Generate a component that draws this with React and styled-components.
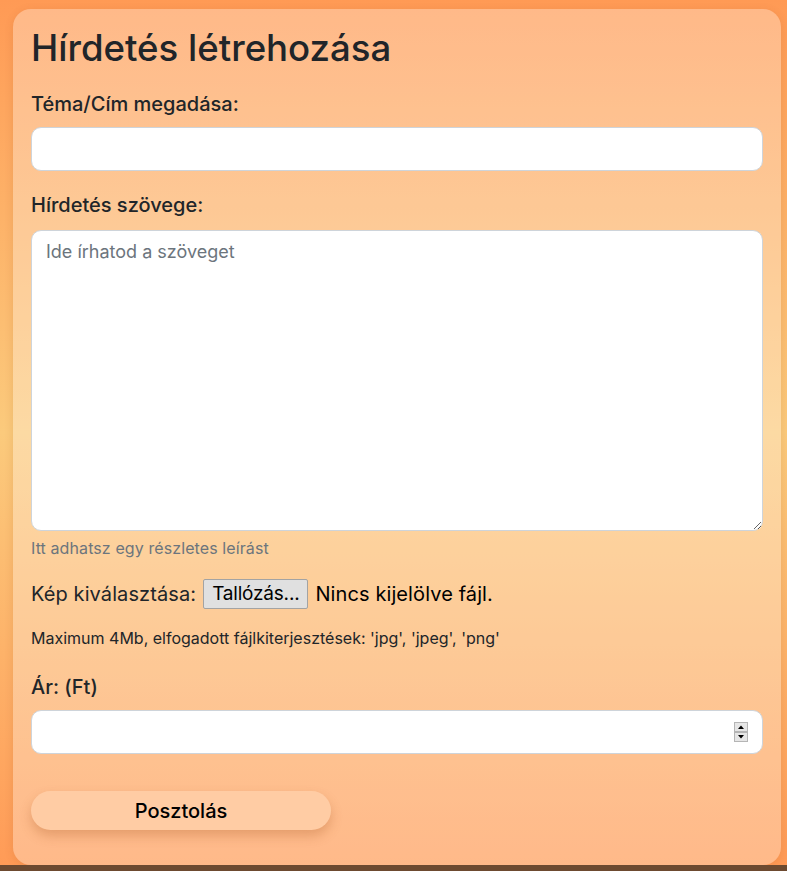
import React from 'react';
import styled, { createGlobalStyle } from 'styled-components';

const GlobalStyle = createGlobalStyle`
  html, body {
    margin: 0;
    padding: 0;
  }
  body {
    font-family: Inter, "Noto Sans", "Liberation Sans", sans-serif;
    color: #212529;
    background: #6d4a30;
  }
`;

const Page = styled.div`
  background: linear-gradient(180deg, #ff9a55 0%, #fbca7c 50%, #ff9b57 100%);
  padding: 9px 6px 0 13px;
`;

const Card = styled.form`
  background: rgba(255, 255, 255, 0.3);
  border-radius: 18px;
  padding: 18px 18px 35px 18px;
  box-shadow: 0 2px 10px rgba(120, 60, 20, 0.12);
`;

const Title = styled.h1`
  margin: 0;
  font-size: 36.6px;
  font-weight: 500;
  line-height: 43px;
`;

const Label = styled.label`
  display: block;
  font-size: 20px;
  font-weight: 500;
  line-height: 1.5;
  margin-top: ${p => p.$top || 19}px;
  margin-bottom: ${p => p.$bottom || 8}px;
`;

const TextInput = styled.input`
  display: block;
  box-sizing: border-box;
  width: 100%;
  height: 44px;
  padding: 0 14px;
  border: 1px solid #ced4da;
  border-radius: 10px;
  background: #fff;
  font: inherit;
  font-size: 18px;
  outline: none;
  appearance: textfield;
  -moz-appearance: textfield;

  &::-webkit-inner-spin-button,
  &::-webkit-outer-spin-button {
    -webkit-appearance: none;
    margin: 0;
  }
`;

const TextArea = styled.textarea`
  display: block;
  box-sizing: border-box;
  width: 100%;
  height: 301px;
  padding: 7px 14px;
  border: 1px solid #ced4da;
  border-radius: 10px;
  background: #fff;
  font: inherit;
  font-size: 18px;
  line-height: 1.5;
  outline: none;

  &::placeholder {
    color: #6c757d;
  }
`;

const Help = styled.div`
  font-size: 16px;
  line-height: 1.4;
  letter-spacing: 0.1px;
  margin-top: 6px;
  color: #6c757d;
`;

const FileRow = styled.label`
  display: flex;
  align-items: center;
  gap: 7px;
  margin-top: 20px;
  font-size: 20px;
  line-height: 30px;
  letter-spacing: 0.1px;
  cursor: pointer;

  input {
    display: none;
  }
`;

const FileButton = styled.span`
  display: inline-block;
  box-sizing: border-box;
  height: 30px;
  padding: 0 8px;
  background: #e0e0e0;
  border: 1px solid #a3a3a3;
  border-radius: 2px;
  font-size: 19px;
  line-height: 28px;
  color: #000;
  letter-spacing: -0.2px;
`;

const FileName = styled.span`
  color: #000;
  font-size: 20px;
`;

const Note = styled.div`
  font-size: 16px;
  font-weight: 400;
  line-height: 1.5;
  margin-top: 17px;
`;

const NumberWrap = styled.div`
  position: relative;
`;

const Spinner = styled.svg`
  position: absolute;
  right: 15px;
  top: 12px;
  width: 14px;
  height: 20px;
`;

const Submit = styled.button`
  display: block;
  width: 300px;
  height: 39px;
  margin-top: 37px;
  border: none;
  border-radius: 20px;
  background: #ffcca4;
  box-shadow: 0 6px 12px rgba(160, 80, 30, 0.28);
  font: inherit;
  font-size: 20px;
  font-weight: 500;
  color: #000;
  cursor: pointer;
`;

export default function App() {
  return (
    <>
      <GlobalStyle />
      <Page>
        <Card onSubmit={e => e.preventDefault()}>
          <Title>Hírdetés létrehozása</Title>
          <Label $top={19} htmlFor="title">Téma/Cím megadása:</Label>
          <TextInput id="title" type="text" />

          <Label $top={19} $bottom={10} htmlFor="body">Hírdetés szövege:</Label>
          <TextArea id="body" placeholder="Ide írhatod a szöveget" />
          <Help>Itt adhatsz egy részletes leírást</Help>

          <FileRow>
            <span>Kép kiválasztása:</span>
            <input type="file" accept=".jpg,.jpeg,.png" />
            <FileButton>Tallózás...</FileButton>
            <FileName>Nincs kijelölve fájl.</FileName>
          </FileRow>
          <Note>Maximum 4Mb, elfogadott fájlkiterjesztések: 'jpg', 'jpeg', 'png'</Note>

          <Label $top={22} htmlFor="price">Ár: (Ft)</Label>
          <NumberWrap>
            <TextInput id="price" type="number" />
            <Spinner viewBox="0 0 14 20">
              <rect x="0.5" y="0.5" width="13" height="9" fill="#e6e6e6" stroke="#b5b5b5" />
              <rect x="0.5" y="10.5" width="13" height="9" fill="#e6e6e6" stroke="#b5b5b5" />
              <path d="M4 7 L7 3.5 L10 7 Z" fill="#000" />
              <path d="M4 13 L7 16.5 L10 13 Z" fill="#000" />
            </Spinner>
          </NumberWrap>

          <Submit type="submit">Posztolás</Submit>
        </Card>
      </Page>
    </>
  );
}
